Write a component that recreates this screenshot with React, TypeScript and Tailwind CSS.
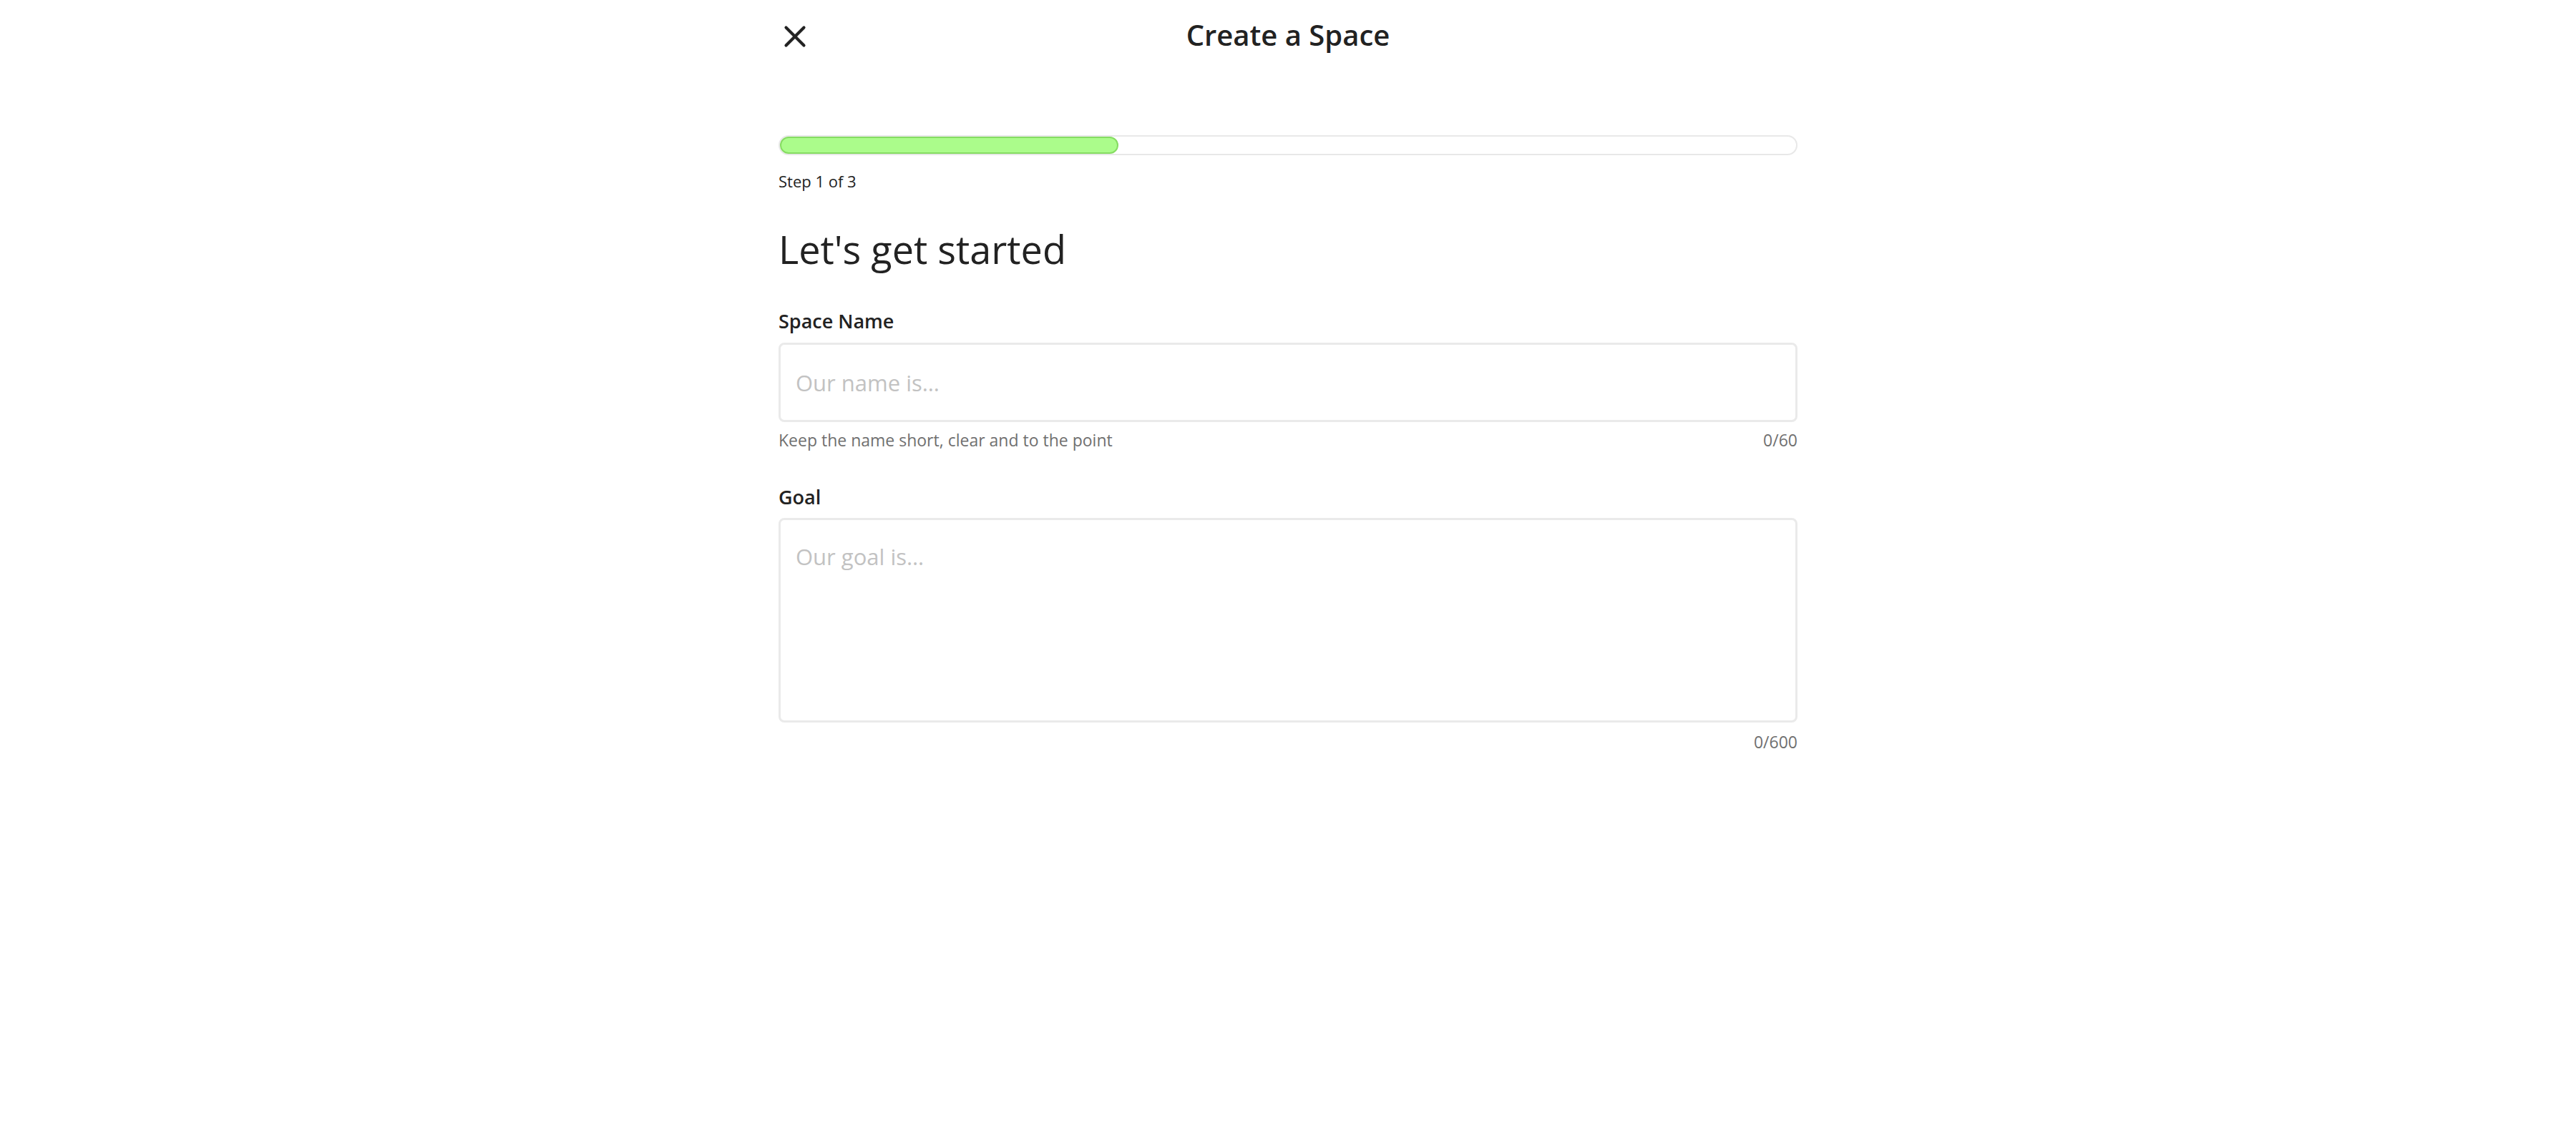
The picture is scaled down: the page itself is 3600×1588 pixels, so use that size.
import React from "react";
import { X } from "lucide-react";

export default function App() {
  const step = 1;
  const total = 3;

  return (
    <div className="min-h-screen bg-white font-['Open_Sans',sans-serif] text-[#222]">
      <div className="w-[1424px] mx-auto">
        {/* Header */}
        <div className="grid grid-cols-[1fr_auto_1fr] items-center h-[98px]">
          <button className="w-[50px] h-[50px] -ml-[2px] mt-[4px] flex items-center justify-center text-[#222]">
            <X size={50} strokeWidth={2} />
          </button>
          <h1 className="text-[40px] leading-none font-semibold">Create a Space</h1>
          <div />
        </div>

        {/* Progress */}
        <div className="mt-[91px] h-[28px] rounded-full border-2 border-[#e8e8e8] bg-white">
          <div
            className="h-full rounded-full border-2 border-[#86dc62] bg-[#abfc8b]"
            style={{ width: `${(step / total) * 100}%` }}
          />
        </div>
        <p className="mt-[25px] text-[22px] leading-none">
          Step {step} of {total}
        </p>

        <h2 className="mt-[57px] text-[54px] leading-none">Let's get started</h2>

        {/* Space name */}
        <label className="block mt-[60px] text-[27px] leading-none font-semibold">Space Name</label>
        <input
          type="text"
          placeholder="Our name is…"
          className="mt-[17px] block w-full h-[111px] rounded-[8px] border-[3px] border-[#eaeaea] bg-white pl-[21px] text-[31px] outline-none placeholder:text-[#c2c2c2]"
        />
        <div className="mt-[14px] flex justify-between text-[23px] leading-none text-[#707070]">
          <span>Keep the name short, clear and to the point</span>
          <span>0/60</span>
        </div>

        {/* Goal */}
        <label className="block mt-[54px] text-[27px] leading-none font-semibold">Goal</label>
        <textarea
          placeholder="Our goal is…"
          className="mt-[16px] block w-full h-[286px] resize-none rounded-[8px] border-[3px] border-[#eaeaea] bg-white pl-[21px] pt-[33px] text-[31px] leading-[1.2] outline-none placeholder:text-[#c2c2c2]"
        />
        <div className="mt-[16px] flex justify-end text-[23px] leading-none text-[#707070]">
          <span>0/600</span>
        </div>
      </div>
    </div>
  );
}
